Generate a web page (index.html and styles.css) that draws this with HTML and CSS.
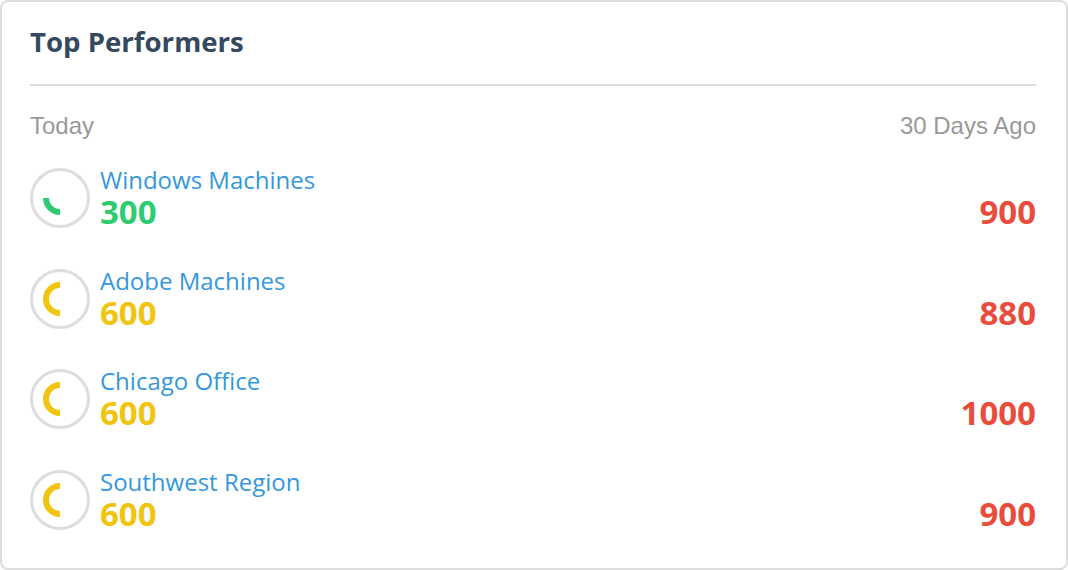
FILE: index.html
```html
<!DOCTYPE html>
<html>
<head>
<meta charset="utf-8">
<link rel="stylesheet" href="styles.css">
</head>
<body>
<div class="card">
  <div class="card-header">
    <h2 class="title">Top Performers</h2>
  </div>
  <div class="cols">
    <span>Today</span>
    <span>30 Days Ago</span>
  </div>
  <ul class="list">
    <li class="row">
      <svg class="gauge" width="60" height="60" viewBox="0 0 60 60">
        <circle cx="30" cy="30" r="28.5" fill="none" stroke="#dddddd" stroke-width="3"/>
        <path d="M16 30 A14 14 0 0 0 30 44" fill="none" stroke="#2ecc71" stroke-width="6"/>
      </svg>
      <div class="info">
        <div class="name">Windows Machines</div>
        <div class="value green">300</div>
      </div>
      <div class="past">900</div>
    </li>
    <li class="row">
      <svg class="gauge" width="60" height="60" viewBox="0 0 60 60">
        <circle cx="30" cy="30" r="28.5" fill="none" stroke="#dddddd" stroke-width="3"/>
        <path d="M30 16 A14 14 0 0 0 30 44" fill="none" stroke="#f1c40f" stroke-width="6"/>
      </svg>
      <div class="info">
        <div class="name">Adobe Machines</div>
        <div class="value yellow">600</div>
      </div>
      <div class="past">880</div>
    </li>
    <li class="row">
      <svg class="gauge" width="60" height="60" viewBox="0 0 60 60">
        <circle cx="30" cy="30" r="28.5" fill="none" stroke="#dddddd" stroke-width="3"/>
        <path d="M30 16 A14 14 0 0 0 30 44" fill="none" stroke="#f1c40f" stroke-width="6"/>
      </svg>
      <div class="info">
        <div class="name">Chicago Office</div>
        <div class="value yellow">600</div>
      </div>
      <div class="past">1000</div>
    </li>
    <li class="row">
      <svg class="gauge" width="60" height="60" viewBox="0 0 60 60">
        <circle cx="30" cy="30" r="28.5" fill="none" stroke="#dddddd" stroke-width="3"/>
        <path d="M30 16 A14 14 0 0 0 30 44" fill="none" stroke="#f1c40f" stroke-width="6"/>
      </svg>
      <div class="info">
        <div class="name">Southwest Region</div>
        <div class="value yellow">600</div>
      </div>
      <div class="past">900</div>
    </li>
  </ul>
</div>
</body>
</html>
```
FILE: styles.css
```css
* { box-sizing: border-box; }
html, body { margin: 0; padding: 0; background: #ffffff; }
.card {
  width: 1068px;
  height: 570px;
  border: 2px solid #dddddd;
  border-radius: 8px;
  padding: 0 30px 0 28px;
  font-family: "Open Sans", sans-serif;
  background: #fff;
}
.card-header {
  height: 84px;
  border-bottom: 2px solid #dddddd;
  display: flex;
  align-items: flex-start;
}
.title {
  margin: 0;
  padding-top: 20px;
  font-size: 27.6px;
  line-height: 38px;
  font-weight: 700;
  color: #34495e;
}
.cols {
  display: flex;
  justify-content: space-between;
  font-family: "Liberation Sans", Arial, sans-serif;
  font-size: 24px;
  line-height: 26px;
  color: #999999;
  padding-top: 27px;
}
.list {
  list-style: none;
  margin: 0;
  padding: 0;
  padding-top: 29px;
  display: flex;
  flex-direction: column;
  gap: 40.67px;
}
.row {
  display: flex;
  align-items: flex-start;
  height: 60px;
}
.gauge {
  flex: none;
  margin-right: 10px;
}
.info {
  flex: 1;
  display: flex;
  flex-direction: column;
  margin-top: -3px;
}
.name {
  font-size: 24px;
  line-height: 29px;
  color: #3498db;
}
.value {
  font-size: 33px;
  line-height: 36px;
  font-weight: 700;
}
.green { color: #2ecc71; }
.yellow { color: #f1c40f; }
.past {
  font-size: 33px;
  line-height: 36px;
  font-weight: 700;
  color: #e74c3c;
  margin-top: 26px;
}
```
